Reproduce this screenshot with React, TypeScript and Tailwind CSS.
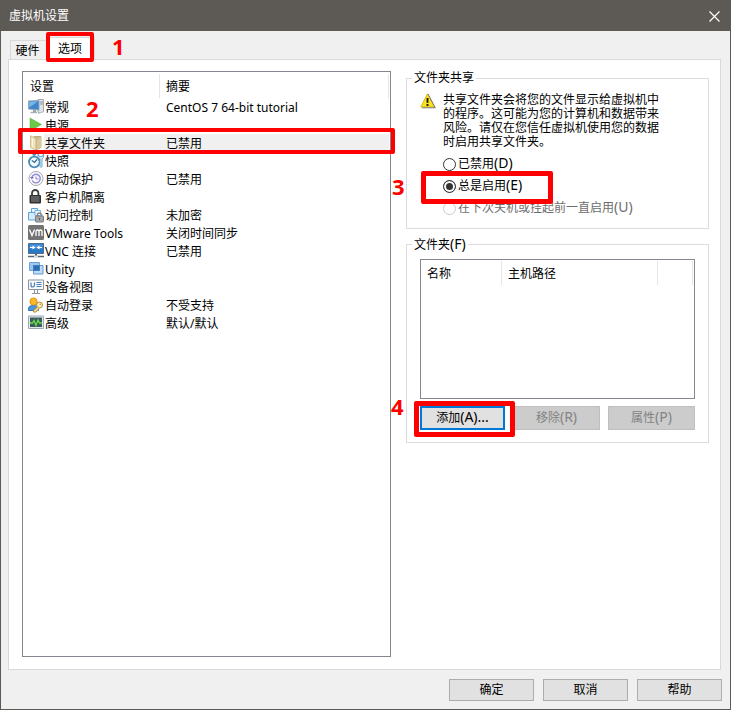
import React, { useState } from "react";
import type { ReactNode } from "react";

const FONT = "font-['Noto_Sans','Noto_Sans_CJK_SC',sans-serif]";

function Icon({ children }: { children: ReactNode }) {
  return (
    <svg viewBox="0 0 16 16" className="size-4 shrink-0" aria-hidden="true">
      {children}
    </svg>
  );
}

const GeneralIcon = () => (
  <Icon>
    <path d="M10 .5h5.500v12l-2 1H10z" fill="#dfe2e6" stroke="#a3a9b0" />
    <path d="M12 3h3M12 5h3" stroke="#8d959d" />
    <path d="M.5 2l10.500-.5v9.500L.5 10z" fill="#3f86c9" stroke="#8fa6bb" />
    <path d="M1.200 2.700l9-.4L1.200 8.500z" fill="#79b4e6" />
    <path d="M5 11h3v2H5z" fill="#9aa1a8" />
    <path d="M2.500 13.500H9" stroke="#a9b1b9" strokeWidth="1.500" />
    <path d="M10 14.500l5-1.500" stroke="#c4c9ce" />
  </Icon>
);

const PowerIcon = () => (
  <Icon>
    <path d="M2 1v13l11.500-6.500z" fill="#6bc84c" stroke="#5dba42" strokeWidth=".6" />
  </Icon>
);

const FolderIcon = () => (
  <Icon>
    <path d="M6 1.500h7v11L8 15z" fill="#cdb98a" stroke="#b5a06c" strokeWidth=".8" />
    <path d="M8.500 5L13 2v10.500L8.500 15z" fill="#d9c89b" />
    <path d="M2.500 .8L8 3.500v12l-5.500-3z" fill="#efe3bd" stroke="#c3b07c" strokeWidth=".8" />
    <path d="M4.500 3v8.500" stroke="#fbf6de" />
  </Icon>
);

const SnapshotIcon = () => (
  <Icon>
    <circle cx="6.300" cy="9" r="5.300" fill="#f4f9fc" stroke="#4a8cb8" strokeWidth="1.800" />
    <path d="M3.800 7.500l2.700 2 2.500-3" fill="none" stroke="#33688d" strokeWidth="1.200" />
    <path d="M4.500 1.500h3.500M6.300 2v1.500" stroke="#4a8cb8" strokeWidth="1.500" />
    <path
      d="M10 1v3.500l2 1.500v7.500q1 2 2 0V6l1.500-1.500V1L14.200 3.500H11.500z"
      fill="#d4ebf8"
      stroke="#5e9ec9"
      strokeWidth=".9"
    />
  </Icon>
);

const ProtectIcon = () => (
  <Icon>
    <circle cx="8" cy="7.500" r="7" fill="#fafafa" stroke="#a9a9b3" />
    <path d="M3.800 6.500a4.300 4.300 0 1 1 .3 3" fill="none" stroke="#9188dc" strokeWidth="1.400" />
    <path d="M2 6h4L3.800 8.500z" fill="#8177d0" />
    <path d="M8 5.500V8h2.500" fill="none" stroke="#8a81d4" />
  </Icon>
);

const IsolationIcon = () => (
  <Icon>
    <path d="M4 7V4.200a3.200 3.200 0 0 1 6.400 0V7" fill="none" stroke="#3c3c3c" strokeWidth="1.800" />
    <rect x="1.500" y="6" width="11.500" height="8.500" rx="1" fill="#303030" />
    <path d="M3 8h8.500M3 10h8.500M3 12h8.500" stroke="#8f8f8f" />
  </Icon>
);

const AccessIcon = () => (
  <Icon>
    <path d="M3.500 1.500h6v5h-6z" fill="#e6f3fc" stroke="#5ba5dc" />
    <path d="M.5 5.500h7.500v7.500H.5z" fill="#d6eafa" stroke="#5ba5dc" />
    <path d="M7 3.500h5.500v5H7z" fill="#f0f8fd" stroke="#74b6e6" />
    <path d="M9.300 10V8.200a2.200 2.200 0 0 1 4.400 0V10" fill="none" stroke="#8a8a8a" strokeWidth="1.400" />
    <rect x="7.500" y="9" width="8" height="6" rx=".8" fill="#a5a5a5" stroke="#7c7c7c" />
    <path d="M11.500 11v2" stroke="#5a5a5a" />
  </Icon>
);

const ToolsIcon = () => (
  <Icon>
    <rect x="0" y="0" width="16" height="15" rx="1.500" fill="#737373" />
    <path
      d="M1.500 4.500L4 10.500 6.500 4.500M8 11V6.500Q8 5 9.500 5T11 6.500V11M11 6.500Q11 5 12.500 5T14 6.500V11"
      fill="none"
      stroke="#fff"
      strokeWidth="1.300"
    />
  </Icon>
);

const VncIcon = () => (
  <Icon>
    <path d="M.5 .5h15v10H.5z" fill="#2b78c5" stroke="#4a6d8e" />
    <path d="M1.500 1.500h13v4h-13z" fill="#4a93dc" />
    <path d="M2 4.500h4M10 4.500h4" stroke="#fff" />
    <path d="M4.500 2.500l3 2-3 2zM11.500 2.500l-3 2 3 2z" fill="#fff" />
    <path d="M7 11h2v2H7z" fill="#5a6570" />
    <path d="M0 13.500h16" stroke="#5a6570" strokeWidth="1.500" />
    <path d="M6 13.500h4" stroke="#d5dce2" strokeWidth="2" />
  </Icon>
);

const UnityIcon = () => (
  <Icon>
    <path d="M1.500 1.500h10v8h-10z" fill="#9cc4ec" stroke="#6ba3dc" />
    <path d="M5.500 4.500h9.500v8.500H5.500z" fill="#c0dbf3" stroke="#5f9bd8" />
    <path d="M5.500 4.500h6v5h-6z" fill="#2c6cb0" stroke="#3d7dc0" />
  </Icon>
);

const DeviceIcon = () => (
  <Icon>
    <path d="M.5 1h15v9.500H.5z" fill="#f5f7f9" stroke="#8b939b" />
    <path d="M3 3.500V6q0 2 1.700 2t1.800-2V3.500" fill="none" stroke="#4a7fb5" strokeWidth="1.200" />
    <path d="M8.500 3.500h5M8.500 5.500h5M8.500 7.500h5" stroke="#4a7fb5" />
    <path d="M6.500 11v3M9.500 11v3M4 14.500h8" fill="none" stroke="#8b939b" />
  </Icon>
);

const LoginIcon = () => (
  <Icon>
    <path d="M.5 13.500v-2q0-3 5-3t5 3v2z" fill="#4b95dc" stroke="#2f76bd" />
    <circle cx="5.500" cy="4.500" r="3.600" fill="#fcb827" stroke="#e0961c" />
    <circle cx="11.500" cy="8" r="3" fill="#fdf0c4" stroke="#b88a34" />
    <circle cx="12.300" cy="7.200" r=".8" fill="#b88a34" />
    <path d="M9.500 10l-4 3.500v1.500h2.500l3.500-4" fill="#f7dd8e" stroke="#b88a34" />
  </Icon>
);

const AdvancedIcon = () => (
  <Icon>
    <path d="M.5 1h15v12.500H.5z" fill="#e3e9ef" stroke="#9ba9b6" />
    <path d="M2 2.500h12V12H2z" fill="#3d5a5c" />
    <path d="M2 8h2.500L6 5.500l2 5L10 5l1.500 3H14" fill="none" stroke="#62e046" strokeWidth="1.300" />
  </Icon>
);

const WarningIcon = () => (
  <svg viewBox="0 0 16 16" className="size-4 shrink-0" role="img" aria-label="警告">
    <path d="M7.500 .8L14.500 14H.8z" fill="#fde31f" stroke="#d8b91a" strokeLinejoin="round" />
    <path d="M8 1l7.300 13.800H2" fill="none" stroke="#6f6c66" strokeWidth=".9" />
    <path d="M7.500 5v4.800" stroke="#151515" strokeWidth="1.900" />
    <path d="M7.500 11v2" stroke="#151515" strokeWidth="1.900" />
  </svg>
);

type Row = { icon: () => React.JSX.Element; name: string; summary?: string };

const rows: Row[] = [
  { icon: GeneralIcon, name: "常规", summary: "CentOS 7 64-bit tutorial" },
  { icon: PowerIcon, name: "电源" },
  { icon: FolderIcon, name: "共享文件夹", summary: "已禁用" },
  { icon: SnapshotIcon, name: "快照" },
  { icon: ProtectIcon, name: "自动保护", summary: "已禁用" },
  { icon: IsolationIcon, name: "客户机隔离" },
  { icon: AccessIcon, name: "访问控制", summary: "未加密" },
  { icon: ToolsIcon, name: "VMware Tools", summary: "关闭时间同步" },
  { icon: VncIcon, name: "VNC 连接", summary: "已禁用" },
  { icon: UnityIcon, name: "Unity" },
  { icon: DeviceIcon, name: "设备视图" },
  { icon: LoginIcon, name: "自动登录", summary: "不受支持" },
  { icon: AdvancedIcon, name: "高级", summary: "默认/默认" },
];

const selected = "共享文件夹";

// The access key after a caption is set slightly larger than the Chinese text.
function Key({ children }: { children: ReactNode }) {
  return <span className="text-sm leading-none">{children}</span>;
}

function Step({ n, className }: { n: number; className: string }) {
  return (
    <span
      className={`pointer-events-none absolute font-['Open_Sans','Noto_Sans',sans-serif] text-[22px] leading-6 font-bold text-[#ff0000] ${className}`}
    >
      {n}
    </span>
  );
}

function Mark({ className, children }: { className: string; children: ReactNode }) {
  return (
    <span className={`pointer-events-none absolute z-10 rounded-xs border-[#ff0000] ${className}`}>
      {children}
    </span>
  );
}

function SettingsTable() {
  return (
    <div className="min-w-0 flex-1 border border-[#828790] bg-white">
      <table className="w-full table-fixed border-collapse text-left">
        <thead>
          <tr className="h-[26px]">
            <th className="w-[137px] p-0 pt-px font-normal">
              <div className="h-6 border-r border-[#e5e5e5] pl-[7px] leading-[26px]">设置</div>
            </th>
            <th className="p-0 pt-px font-normal">
              <div className="mr-px h-6 border-r border-[#e5e5e5] pl-1.5 leading-[26px]">摘要</div>
            </th>
          </tr>
        </thead>
        <tbody>
          {rows.map(({ icon: RowIcon, name, summary }) => {
            const on = name === selected;
            return (
              <tr key={name} className="relative h-[18px]" aria-selected={on}>
                <td className="p-0">
                  <div className="flex h-[18px] items-center pl-[5px]">
                    <RowIcon />
                    <span
                      className={`h-[18px] flex-1 pl-px leading-5 whitespace-nowrap ${on ? "bg-[#f0f0f0]" : ""}`}
                    >
                      {name}
                    </span>
                  </div>
                  {on && (
                    <Mark className="-inset-x-[5px] -top-1.5 -bottom-0.5 border-4">
                      <Step n={2} className="-top-9 left-16" />
                    </Mark>
                  )}
                </td>
                <td className="p-0">
                  <div
                    className={`mr-px h-[18px] pl-1.5 leading-5 whitespace-nowrap ${on ? "bg-[#f0f0f0]" : ""}`}
                  >
                    {summary}
                  </div>
                </td>
              </tr>
            );
          })}
        </tbody>
      </table>
    </div>
  );
}

const modes = [
  { id: "disabled", label: "已禁用", hint: "(D)" },
  { id: "always", label: "总是启用", hint: "(E)" },
  { id: "until", label: "在下次关机或挂起前一直启用", hint: "(U)", off: true },
];

function SharingGroup() {
  const [mode, setMode] = useState("always");
  return (
    <fieldset className="min-w-0 border border-[#dcdcdc] px-[13px] pb-[9px]">
      <legend className="-ml-2 px-0.5 leading-[14px]">文件夹共享</legend>
      <div className="flex gap-[7px] pt-2">
        <WarningIcon />
        <p className="w-[216px] leading-[14px]">
          共享文件夹会将您的文件显示给虚拟机中的程序。这可能为您的计算机和数据带来风险。请仅在您信任虚拟机使用您的数据时启用共享文件夹。
        </p>
      </div>
      <div className="flex flex-col items-start pt-1 pl-[23px]">
        {modes.map((m) => (
          <div key={m.id} className="relative flex h-[22px] items-center">
            <input
              type="radio"
              name="sharing"
              id={m.id}
              checked={mode === m.id}
              disabled={m.off}
              onChange={() => setMode(m.id)}
              className="size-[13px] appearance-none rounded-full border border-[#333] bg-white checked:bg-[#333] checked:shadow-[inset_0_0_0_2px_#fff] disabled:border-[#ccc]"
            />
            <label
              htmlFor={m.id}
              className={`pl-0.5 leading-[22px] whitespace-nowrap ${m.off ? "text-[#6d6d6d]" : ""}`}
            >
              {m.label}
              <Key>{m.hint}</Key>
            </label>
            {m.id === "always" && (
              <Mark className="-top-1 -left-[22px] h-[33px] w-[132px] border-5">
                <Step n={3} className="-top-0.5 -left-[34px]" />
              </Mark>
            )}
          </div>
        ))}
      </div>
    </fieldset>
  );
}

function FoldersGroup() {
  const disabledButton =
    "h-6 flex-1 border border-[#bfbfbf] bg-[#cccccc] whitespace-nowrap text-[#838383]";
  return (
    <fieldset className="min-w-0 border border-[#dcdcdc] px-[13px] pb-3">
      <legend className="-ml-2 px-0.5 leading-[14px]">
        文件夹<Key>(F)</Key>
      </legend>
      <div className="mt-[7px] h-[140px] border border-[#828790] bg-white">
        <table className="w-full table-fixed border-collapse text-left">
          <thead>
            <tr>
              <th className="w-[81px] p-0 pt-px font-normal">
                <div className="h-6 border-r border-[#e5e5e5] pl-1.5 leading-[26px]">名称</div>
              </th>
              <th className="p-0 pt-px font-normal">
                <div className="h-6 border-r border-[#e5e5e5] pl-1.5 leading-[26px]">主机路径</div>
              </th>
              <td className="w-9 p-0 pt-px">
                <div className="mr-px h-6 border-r border-[#e5e5e5]" />
              </td>
            </tr>
          </thead>
        </table>
      </div>
      <div className="flex gap-2 pt-[7px]">
        <div className="relative flex flex-1">
          <button
            type="button"
            className="h-6 flex-1 border-2 border-[#0078d7] bg-[#e1e1e1] whitespace-nowrap"
          >
            添加<Key>(A)...</Key>
          </button>
          <Mark className="-top-[5px] -right-2.5 -bottom-[7px] -left-1.5 border-5">
            <Step n={4} className="-top-3 -left-7" />
          </Mark>
        </div>
        <button type="button" disabled className={disabledButton}>
          移除<Key>(R)</Key>
        </button>
        <button type="button" disabled className={disabledButton}>
          属性<Key>(P)</Key>
        </button>
      </div>
    </fieldset>
  );
}

export default function App() {
  return (
    <div
      className={`flex min-h-screen flex-col border border-[#5d5955] bg-[#f0f0f0] text-xs text-black ${FONT}`}
    >
      <header className="flex h-[30px] items-center justify-between bg-[#5d5955] pr-2.5 pl-2 text-white">
        <h1>虚拟机设置</h1>
        <button type="button" aria-label="关闭">
          <svg viewBox="0 0 11 11" className="size-[11px]" aria-hidden="true">
            <path d="M.5.5l10 10M10.500.5l-10 10" stroke="#fff" strokeWidth="1.200" />
          </svg>
        </button>
      </header>

      <main className="flex flex-1 flex-col pt-1.5 pr-[9px] pl-[7px]">
        <div role="tablist" className="flex items-end pl-0.5">
          <button
            type="button"
            role="tab"
            aria-selected="false"
            className="h-[19px] w-[37px] border border-b-0 border-[#d9d9d9] pr-0.5 leading-[19px] whitespace-nowrap"
          >
            硬件
          </button>
          <button
            type="button"
            role="tab"
            aria-selected="true"
            className="relative -mb-px h-[23px] w-12 border border-b-0 border-[#d9d9d9] bg-white pr-0.5 pb-px text-center whitespace-nowrap"
          >
            选项
            <Mark className="-top-1.5 -left-0.5 h-[30px] w-12 border-4">
              <Step n={1} className="-top-0.5 left-[62px]" />
            </Mark>
          </button>
        </div>
        <div className="flex flex-1 gap-[15px] border border-[#d9d9d9] bg-white pt-[11px] pr-[11px] pb-3 pl-[13px]">
          <SettingsTable />
          <div className="flex w-[303px] shrink-0 flex-col gap-2">
            <SharingGroup />
            <FoldersGroup />
          </div>
        </div>
      </main>

      <footer className="flex justify-end gap-[9px] px-2 pt-[9px] pb-2">
        {["确定", "取消", "帮助"].map((t) => (
          <button
            key={t}
            type="button"
            className="h-[22px] w-[85px] border border-[#adadad] bg-[#e1e1e1]"
          >
            {t}
          </button>
        ))}
      </footer>
    </div>
  );
}
